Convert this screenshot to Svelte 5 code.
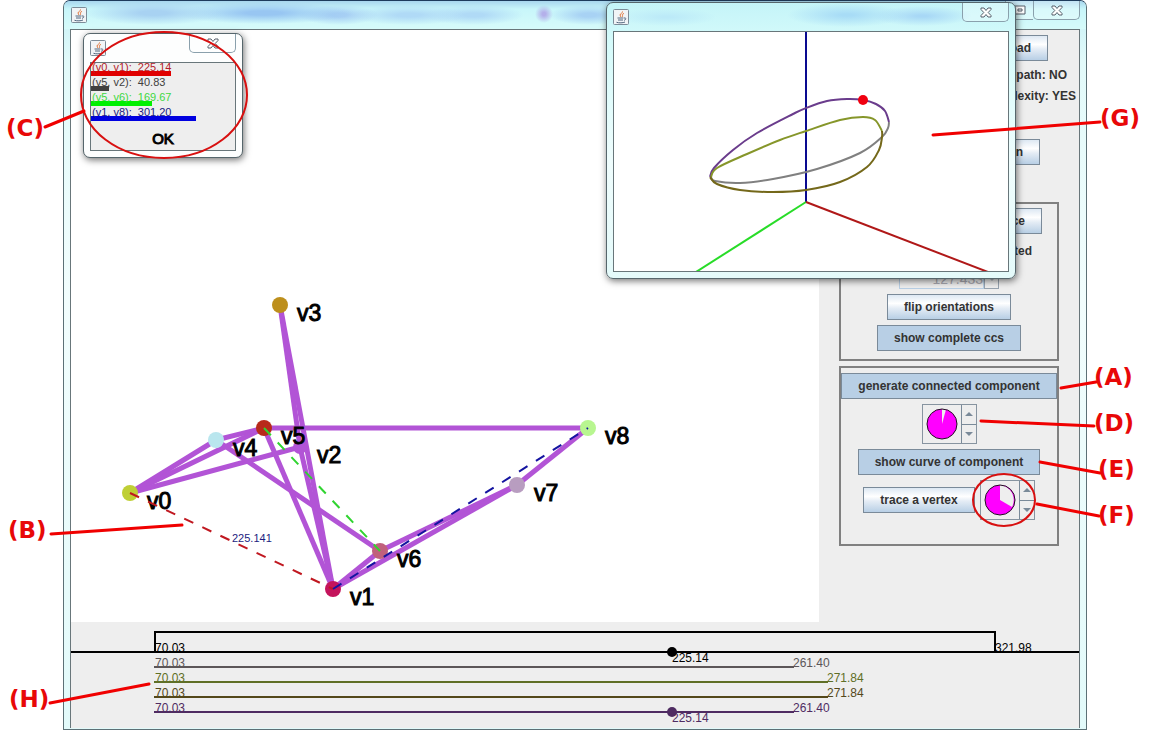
<script lang="ts">
  type Point = [number, number];
  type Vertex = { id: string; x: number; y: number; color: string };
  type Track = { y: number; to: number; max: string; color: string };

  const vertices: Vertex[] = [
    { id: 'v0', x: 59, y: 463, color: '#bfcf35' },
    { id: 'v1', x: 262, y: 559, color: '#c4145c' },
    { id: 'v2', x: 229, y: 417, color: '#b254d6' },
    { id: 'v3', x: 209, y: 275, color: '#bd8f1c' },
    { id: 'v4', x: 145, y: 410, color: '#b9e6ee' },
    { id: 'v5', x: 193, y: 398, color: '#b82a1a' },
    { id: 'v6', x: 309, y: 521, color: '#c0607c' },
    { id: 'v7', x: 446, y: 455, color: '#b89dc0' },
    { id: 'v8', x: 517, y: 398, color: '#b8f690' }
  ];

  const edges: Point[] = [
    [0, 4], [4, 5], [0, 5], [0, 2], [3, 1], [3, 2], [2, 1],
    [5, 1], [4, 6], [5, 8], [6, 1], [6, 7], [7, 1], [7, 8]
  ];

  const measured = [
    { a: 0, b: 1, color: '#c01820' },
    { a: 5, b: 6, color: '#30d430' },
    { a: 1, b: 8, color: '#1414a0' }
  ];

  const lengths = [
    { pair: '(v0, v1):', value: '225.14', width: 80, bar: '#e00000', text: '#b41c28' },
    { pair: '(v5, v2):', value: '40.83', width: 18, bar: '#404040', text: '#404040' },
    { pair: '(v5, v6):', value: '169.67', width: 61, bar: '#00f000', text: '#40d840' },
    { pair: '(v1, v8):', value: '301.20', width: 105, bar: '#0000e0', text: '#1a1a80' }
  ];

  const tracks: Track[] = [
    { y: 45, to: 723, max: '261.40', color: '#5c5658' },
    { y: 60, to: 757, max: '271.84', color: '#5f6f26' },
    { y: 75, to: 757, max: '271.84', color: '#54481a' },
    { y: 90, to: 723, max: '261.40', color: '#4f2c62' }
  ];

  const curves: { color: string; points: Point[] }[] = [
    { color: '#808080', points: [[275, 90], [274, 96], [268, 105], [246, 121], [203, 137], [159, 147], [126, 151], [101, 149], [97, 145]] },
    { color: '#6a3c8c', points: [[96, 145], [100, 136], [119, 118], [143, 101], [179, 82], [192, 76], [213, 69], [233, 67], [249, 68], [262, 72], [271, 79], [275, 90]] },
    { color: '#86962a', points: [[97, 145], [103, 136], [133, 122], [166, 108], [192, 99], [226, 88], [249, 85], [261, 88], [268, 99]] },
    { color: '#74681a', points: [[268, 99], [268, 105], [265, 118], [253, 135], [226, 150], [192, 158], [159, 160], [126, 158], [103, 152], [96, 145]] }
  ];

  const leftNotes = [
    { name: '(C)', x: 6, y: 136, line: [45, 127, 84, 111] },
    { name: '(B)', x: 8, y: 538, line: [51, 534, 182, 525] },
    { name: '(H)', x: 9, y: 707, line: [50, 703, 149, 684] }
  ];

  // measured from the left edge of the right-hand overlay
  const rightNotes = [
    { name: '(G)', x: 180, y: 126, line: [13, 135, 180, 122] },
    { name: '(A)', x: 174, y: 385, line: [141, 388, 176, 382] },
    { name: '(D)', x: 174, y: 431, line: [61, 421, 174, 426] },
    { name: '(E)', x: 178, y: 477, line: [120, 462, 180, 473] },
    { name: '(F)', x: 178, y: 523, line: [117, 504, 179, 516] }
  ];

  // Catmull-Rom through all points
  function smooth(p: Point[]) {
    let d = `M${p[0][0]} ${p[0][1]}`;
    for (let i = 0; i < p.length - 1; i++) {
      const a = p[i - 1] ?? p[i];
      const b = p[i];
      const c = p[i + 1];
      const e = p[i + 2] ?? c;
      d += ` C${b[0] + (c[0] - a[0]) / 6} ${b[1] + (c[1] - a[1]) / 6}`;
      d += ` ${c[0] - (e[0] - b[0]) / 6} ${c[1] - (e[1] - b[1]) / 6} ${c[0]} ${c[1]}`;
    }
    return d;
  }
</script>

{#snippet javaIcon()}
  <svg class="java" width="16" height="16" viewBox="0 0 16 16" aria-hidden="true">
    <rect x="0.5" y="0.5" width="15" height="15" rx="1" fill="#f1f4f6" stroke="#7d8c98" />
    <path d="M9.500 2.500c.5 1.500-2.500 2-2.500 3.500 0 1 1 1.200 1 2.200M11 4.500c-1.500.500-2.200 1-1.500 2 .4.600 0 1.200-.5 1.600" fill="none" stroke="#e2763a" />
    <path d="M4.500 9h6M5 11h5M3.500 13.300c2.500.8 6.500.7 8.500-.3M11 9c2.500-.6 2.500 1.800 0 2.300" fill="none" stroke="#53677f" />
  </svg>
{/snippet}

{#snippet cross()}
  <svg width="12" height="11" viewBox="0 0 12 11" aria-hidden="true">
    <path d="M1 1h3l2 2.500L8 1h3v1.500L8.200 5.500 11 8.500V10H8L6 7.500 4 10H1V8.500L3.800 5.500 1 2.500z" fill="#fff" stroke="#56606c" />
  </svg>
{/snippet}

{#snippet pieSpinner(label: string, wedge: string)}
  <div class="spinner" role="group" aria-label={label}>
    <svg class="pie" width="38" height="38" viewBox="0 0 38 38" aria-hidden="true">
      <circle cx="19" cy="19" r="15" fill="#ff00ff" />
      <path d={wedge} fill="#eee" />
      <circle cx="19" cy="19" r="15" fill="none" stroke="#201020" />
    </svg>
    <div class="steps">
      <button class="step" aria-label="Increase"><svg width="8" height="4"><path d="M0 4L4 0l4 4z" fill="#7a8a99" /></svg></button>
      <button class="step" aria-label="Decrease"><svg width="8" height="4"><path d="M0 0l4 4 4-4z" fill="#7a8a99" /></svg></button>
    </div>
  </div>
{/snippet}

<div class="desktop">
  <main class="window">
    <header class="titlebar">
      {@render javaIcon()}
      <div class="caption-buttons">
        <button class="caption max" aria-label="Maximize"><svg width="12" height="10"><path d="M1 1h10v8H1zM4 4h4v2H4z" fill="#fff" stroke="#56606c" /></svg></button>
        <button class="caption" aria-label="Close">{@render cross()}</button>
      </div>
    </header>

    <div class="client">
      <div class="work">
        <svg class="canvas" role="img" aria-label="Linkage">
          {#each edges as [a, b]}
            <line class="edge" x1={vertices[a].x} y1={vertices[a].y} x2={vertices[b].x} y2={vertices[b].y} />
          {/each}
          {#each vertices as v (v.id)}
            <circle cx={v.x} cy={v.y} r={v.id === 'v2' ? 7 : 8} fill={v.color} />
            <text class="vertex" x={v.x + 17} y={v.y + 16}>{v.id}</text>
          {/each}
          {#each measured as m}
            <line class="dash" x1={vertices[m.a].x} y1={vertices[m.a].y} x2={vertices[m.b].x} y2={vertices[m.b].y} stroke={m.color} />
          {/each}
          <text class="length" x="161" y="512">225.141</text>
        </svg>

        <aside class="side">
          <div class="top">
            <button class="btn load">load</button>
            <p class="status path">1-path: NO</p>
            <p class="status low">complexity: YES</p>
            <button class="btn open">open</button>
          </div>

          <section class="group ccs">
            <button class="btn trace">trace</button>
            <p class="status oriented">oriented</p>
            <div class="number">
              <input type="text" value="127.433" disabled aria-label="Length" />
              <button class="step" aria-label="Decrease" disabled><svg width="8" height="4"><path d="M0 0l4 4 4-4z" fill="#b0b8c0" /></svg></button>
            </div>
            <button class="btn">flip orientations</button>
            <button class="btn on">show complete ccs</button>
          </section>

          <section class="group component">
            <button class="btn on">generate connected component</button>
            {@render pieSpinner('Component', 'M19 19V4a15 15 0 0 1 4 0.600z')}
            <button class="btn on">show curve of component</button>
            <div class="row">
              <button class="btn">trace a vertex</button>
              {@render pieSpinner('Vertex', 'M19 19V4a15 15 0 0 1 12 22z')}
            </div>
          </section>
        </aside>
      </div>

      <svg class="chart" role="img" aria-label="Length intervals">
        <line class="axis" x1="0" y1="30" x2="100%" y2="30" stroke="#000" />
        <path class="axis" d="M84 30V10H924V30" stroke="#000" fill="none" />
        <text x="84" y="30">70.03</text>
        <text x="924" y="30">321.98</text>
        <circle cx="601" cy="30" r="5" />
        <text x="601" y="40">225.14</text>
        {#each tracks as t}
          <line class="axis" x1="83" y1={t.y} x2={t.to} y2={t.y} stroke={t.color} />
          <text x="84" y={t.y} fill={t.color}>70.03</text>
          <text x={t.to - 1} y={t.y} fill={t.color}>{t.max}</text>
        {/each}
        <circle cx="601" cy="90" r="5" fill="#4f2c62" />
        <text x="601" y="100" fill="#4f2c62">225.14</text>
      </svg>
    </div>
  </main>

  <section class="popup lengths" aria-label="Lengths">
    <header class="popup-title">
      {@render javaIcon()}
      <button class="caption" aria-label="Close">{@render cross()}</button>
    </header>
    <div class="popup-body">
      {#each lengths as l}
        <div class="measure">
          <span style:color={l.text}>{l.pair}&nbsp; {l.value}</span>
          <div class="bar" style:width="{l.width}px" style:background={l.bar}></div>
        </div>
      {/each}
      <button class="ok">OK</button>
    </div>
  </section>

  <section class="popup curve" aria-label="Curve">
    <header class="popup-title">
      {@render javaIcon()}
      <button class="caption" aria-label="Close">{@render cross()}</button>
    </header>
    <svg class="plot" role="img" aria-label="Component curve">
      <line x1="192" y1="0" x2="192" y2="170" stroke="#0a0a90" />
      <line x1="192" y1="170" x2="82" y2="240" stroke="#28dc28" />
      <line x1="192" y1="170" x2="374" y2="240" stroke="#b01818" />
      {#each curves as c}
        <path d={smooth(c.points)} stroke={c.color} fill="none" />
      {/each}
      <circle cx="249" cy="68" r="5" fill="#f00010" />
    </svg>
  </section>

  <svg class="notes left">
    <ellipse cx="164" cy="95" rx="83" ry="63" />
    {#each leftNotes as n (n.name)}
      <line x1={n.line[0]} y1={n.line[1]} x2={n.line[2]} y2={n.line[3]} />
      <text x={n.x} y={n.y}>{n.name}</text>
    {/each}
  </svg>
  <svg class="notes right">
    <ellipse cx="84" cy="500" rx="31" ry="26" />
    {#each rightNotes as n (n.name)}
      <line x1={n.line[0]} y1={n.line[1]} x2={n.line[2]} y2={n.line[3]} />
      <text x={n.x} y={n.y}>{n.name}</text>
    {/each}
  </svg>
</div>

<style>
  :global(body) { margin: 0; background: #fff; }
  .desktop { position: relative; overflow: hidden; font-family: "Liberation Sans", Arial, sans-serif; }
  button { font: inherit; margin: 0; padding: 0; box-sizing: border-box; }
  svg { display: block; }

  .window {
    display: flex; flex-direction: column; box-sizing: border-box; min-height: 100vh; margin: 0 63px;
    padding: 0 6px 1px; border: 1px solid #5c7076; border-top-color: #1e3c5c; border-radius: 7px 7px 0 0;
    background: linear-gradient(180deg, #c4f0f6 0, #e2fafa 60px, #f2fdfd 300px, #e2fafa 100%);
  }
  .titlebar {
    display: flex; justify-content: space-between; align-items: flex-start; height: 28px; margin: 0 -6px; padding: 0 6px 0 7px;
    background:
      radial-gradient(70px 12px at 90px 12px, #a8d2f2 20%, transparent 100%),
      radial-gradient(90px 11px at 200px 12px, #98c6f2 20%, transparent 100%),
      radial-gradient(40px 10px at 275px 14px, #a8d0f4 20%, transparent 100%),
      radial-gradient(60px 10px at 345px 14px, #b0daf6 20%, transparent 100%),
      radial-gradient(50px 10px at 410px 14px, #b0daf6 20%, transparent 100%),
      radial-gradient(9px 9px at 480px 13px, #b4b0ea 20%, transparent 100%),
      radial-gradient(40px 10px at 525px 14px, #a8d2f4 20%, transparent 100%),
      linear-gradient(180deg, #a8d6ee 0, #c8f6fa 8px, #d6fbfa 100%);
    border-radius: 6px 6px 0 0;
  }
  .titlebar .java { margin-top: 6px; }
  .caption-buttons { display: flex; }
  .caption {
    display: flex; align-items: center; justify-content: center; width: 47px; height: 19px;
    border: 1px solid #8aa0ac; border-top: 0; border-radius: 0 0 5px 5px; background: rgba(255, 255, 255, 0.3);
  }
  .caption.max { width: 28px; border-radius: 0; border-right: 0; }

  .client { display: flex; flex: 1; flex-direction: column; border: 1px solid #68767a; border-bottom: 0; background: #eee; }
  .work { display: flex; flex: 1; }
  .canvas { flex: 1; min-width: 0; min-height: 592px; background: #fff; }
  .edge { stroke: #b254d6; stroke-width: 5; }
  .dash { stroke-width: 2; stroke-dasharray: 10 10; }
  .vertex { font-size: 23px; stroke: #000; stroke-width: 1px; }
  .length { font-size: 11px; fill: #1c1c80; }

  .side { display: flex; flex-direction: column; gap: 5px; width: 220px; padding: 5px 20px 0; color: #333; font-size: 12px; font-weight: bold; }
  .top { display: flex; flex-direction: column; align-items: center; height: 162px; }
  .status { margin: 0; line-height: 21px; text-align: right; white-space: nowrap; }
  .path { width: 236px; margin-top: 4px; }
  .low { width: 254px; }
  .btn {
    height: 26px; padding: 0 16px; border: 1px solid #7a8a99; color: #333; white-space: nowrap;
    background: linear-gradient(180deg, #dde8f3 0, #fff 35%, #e4ecf5 55%, #b8cfe5 100%);
  }
  .btn.on { background: #b8cfe5; }
  .load { width: 198px; text-align: right; }
  .open { width: 182px; margin-top: 32px; text-align: right; }
  .trace { width: 186px; text-align: right; }
  .oriented { width: 166px; margin: 2px 0; }

  .group { display: flex; flex-direction: column; align-items: center; gap: 5px; box-sizing: border-box; border: 2px solid #808080; padding-top: 4px; }
  .ccs { height: 159px; }
  .component { height: 180px; padding-top: 5px; }
  .number { display: flex; width: 100px; height: 20px; }
  .number input { flex: 1; min-width: 0; box-sizing: border-box; border: 1px solid #b8cfe5; background: #eee; padding: 0; font: inherit; font-size: 14px; font-weight: normal; text-align: right; color: #a8a8b0; }
  .number .step { width: 15px; flex: none; border: 1px solid #98a4b0; }
  .row { display: flex; align-items: center; gap: 5px; }
  .spinner { display: flex; width: 55px; height: 40px; box-sizing: border-box; border: 1px solid #8794a0; }
  .pie { flex: none; }
  .steps { display: flex; flex: 1; flex-direction: column; }
  .step { display: flex; flex: 1; align-items: center; justify-content: center; border: 0; border-left: 1px solid #7a8a99; background: #eee; }
  .step + .step { border-top: 1px solid #7a8a99; }

  .chart { width: 100%; height: 106px; font-size: 12px; }
  .axis { stroke-width: 2; }

  .popup {
    position: absolute; display: flex; flex-direction: column; box-sizing: border-box; border: 1px solid #56666c; border-radius: 7px;
    padding: 0 6px 6px; box-shadow: 1px 2px 7px rgba(0, 0, 0, 0.55);
  }
  .popup-title { display: flex; justify-content: space-between; height: 28px; }
  .popup-title .java { margin-top: 6px; }
  .lengths { left: 83px; top: 33px; width: 160px; height: 125px; background: #fdfefe; }
  .curve {
    right: 134px; top: 2px; width: 410px; height: 277px;
    background:
      radial-gradient(60px 12px at 240px 12px, #a8dcf6 10%, transparent 100%),
      radial-gradient(50px 10px at 315px 13px, #a8d8f6 10%, transparent 100%),
      radial-gradient(50px 9px at 60px 14px, #bceaf8 10%, transparent 100%),
      linear-gradient(180deg, #c4f4f8 0, #d6fbfb 40px, #effdfd 160px, #e4fafa 100%);
  }
  .popup-body { display: flex; flex: 1; flex-direction: column; border: 1px solid #68767a; background: #eee; font-size: 11px; }
  .measure { height: 15px; padding-left: 1px; line-height: 8px; white-space: pre; }
  .measure .bar { height: 5px; margin-left: -1px; }
  .ok { flex: 1; border: 0; background: none; font-size: 15px; color: #000; -webkit-text-stroke: 1px #000; padding-top: 3px; }
  .plot { flex: 1; min-height: 0; width: 100%; box-sizing: border-box; border: 1px solid #68767a; background: #fff; stroke-width: 2; }

  .notes { position: absolute; top: 0; height: 100%; pointer-events: none; font: bold 23px "DejaVu Sans", sans-serif; fill: #e80808; }
  .notes.left { left: 0; width: 260px; }
  .notes.right { right: 0; width: 230px; }
  .notes line { stroke: #f00000; stroke-width: 3; stroke-linecap: round; }
  .notes ellipse { fill: none; stroke: #d81010; stroke-width: 2; }
</style>
